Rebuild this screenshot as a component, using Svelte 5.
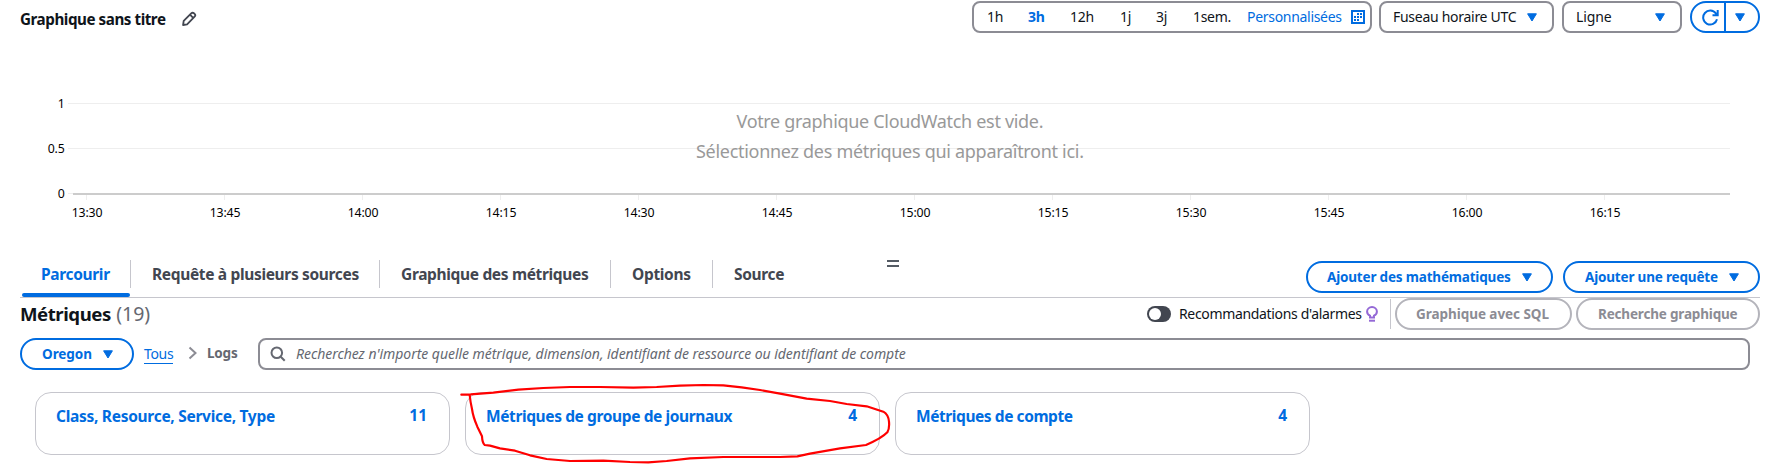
<script>
  const ranges = [
    { label: '1h', width: 41 },
    { label: '3h', width: 42, active: true },
    { label: '12h', width: 50 },
    { label: '1j', width: 36 },
    { label: '3j', width: 37 },
    { label: '1sem.', width: 54 }
  ];
  const ticks = ['13:30', '13:45', '14:00', '14:15', '14:30', '14:45', '15:00', '15:15', '15:30', '15:45', '16:00', '16:15'];
  const levels = [
    { label: '1', y: 69.5 },
    { label: '0.5', y: 114.5 },
    { label: '0', y: 159.5 }
  ];
  const tabs = [
    { label: 'Parcourir', width: 111, active: true },
    { label: 'Requête à plusieurs sources', width: 249 },
    { label: 'Graphique des métriques', width: 231 },
    { label: 'Options', width: 102 },
    { label: 'Source', width: 94 }
  ];
  const cards = [
    { name: 'Class, Resource, Service, Type', count: 11, spacing: -0.29 },
    { name: 'Métriques de groupe de journaux', count: 4, spacing: -0.39, marked: true },
    { name: 'Métriques de compte', count: 4, spacing: -0.43 }
  ];
</script>

{#snippet caret()}
  <svg class="caret" width="10" height="9" viewBox="0 0 10 9"><path d="M.6.8h8.800L5 8z" fill="currentColor" stroke="currentColor" stroke-width="1" stroke-linejoin="round" /></svg>
{/snippet}

<main>
  <header class="top">
    <h2>Graphique sans titre</h2>
    <svg class="pencil" width="16" height="16" viewBox="0 0 16 16" fill="none" stroke="#424650" stroke-width="1.8" stroke-linejoin="round"><path d="M2.1 14l.6-4.1 7.5-7.5c.8-.8 2-.8 2.8-.1l.6.6c.8.8.8 2 0 2.8l-7.5 7.6zM9 3.7l3.4 3.4" /></svg>
    <div class="controls">
      <div class="box ranges">
        {#each ranges as r}
          <span class:active={r.active} style="width:{r.width}px">{r.label}</span>
        {/each}
        <a class="custom">Personnalisées</a>
        <svg width="14" height="14" viewBox="0 0 14 14"><path fill="#006ce0" fill-rule="evenodd" d="M0 0h14v14H0zM2 2v10h10V2z" /><path fill="#006ce0" d="M6 3h2v2H6zM9 3h2v2H9zM3 6h2v2H3zM6 6h2v2H6zM9 6h2v2H9zM3 9h2v2H3zM6 9h2v2H6z" /></svg>
      </div>
      <div class="box zone"><span>Fuseau horaire UTC</span>{@render caret()}</div>
      <div class="box kind"><span>Ligne</span>{@render caret()}</div>
      <div class="refresh">
        <span class="half"><svg width="17" height="17" viewBox="0 0 17 17" fill="none" stroke="#006ce0" stroke-width="2"><path d="M15 10.2A7 7 0 1 1 13.9 4.5L15.6 6M15.7 1v5.2h-5.2" /></svg></span>
        <span class="half second">{@render caret()}</span>
      </div>
    </div>
  </header>

  <svg class="chart" width="1769" height="226" viewBox="0 0 1769 226">
    {#each levels as l}
      <path d="M68 {l.y}H{l.label === '0' ? 73 : 1730}" stroke="#eee" />
      <text class="axis" x="64.5" y={l.y + 4.5} text-anchor="end">{l.label}</text>
    {/each}
    <path d="M73 160H1730" stroke="#ccc" stroke-width="2" />
    {#each ticks as t, i}
      <path d="M{86.5 + 138 * i} 161v5" stroke="#eee" />
      <text class="axis" x={87 + 138 * i} y="183" text-anchor="middle">{t}</text>
    {/each}
    <text class="empty" x="890" y="94" text-anchor="middle" textLength="307">Votre graphique CloudWatch est vide.</text>
    <text class="empty" x="890" y="124" text-anchor="middle" textLength="388">Sélectionnez des métriques qui apparaîtront ici.</text>
  </svg>

  <nav class="tabs">
    {#each tabs as t}
      <div class="tab" class:active={t.active} style="width:{t.width}px"><span>{t.label}</span></div>
    {/each}
    <div class="actions">
      <button class="pill math">Ajouter des mathématiques{@render caret()}</button>
      <button class="pill query">Ajouter une requête{@render caret()}</button>
    </div>
    <i class="handle"></i>
  </nav>

  <section class="heading">
    <h1>Métriques <span>(19)</span></h1>
    <div class="tools">
      <i class="switch"></i>
      <span class="reco">Recommandations d'alarmes</span>
      <svg class="bulb" width="12" height="16" viewBox="0 0 12 16"><path d="M4 11.5V9.7C2.3 9 1.1 7.5 1.1 5.6a4.9 4.5 0 0 1 9.8 0C10.9 7.5 9.7 9 8 9.7v1.8z" fill="none" stroke="#9469d6" stroke-width="2" /><path d="M3 13.7h6v2H3z" fill="#9469d6" /></svg>
      <i class="rule"></i>
      <button class="pill off sql">Graphique avec SQL</button>
      <button class="pill off search-graph">Recherche graphique</button>
    </div>
  </section>

  <section class="filter">
    <button class="pill region">Oregon{@render caret()}</button>
    <a class="all">Tous</a>
    <svg class="chevron" width="10" height="14" viewBox="0 0 10 14" fill="none" stroke="#8c8c94" stroke-width="2"><path d="M1.5 1.5L7.5 7l-6 5.5" /></svg>
    <b class="logs">Logs</b>
    <div class="box search">
      <svg width="16" height="16" viewBox="0 0 16 16" fill="none" stroke="#656871" stroke-width="2"><circle cx="6.8" cy="6.8" r="5.3" /><path d="M10.7 10.7l4 4" /></svg>
      <em>Recherchez n'importe quelle métrique, dimension, identifiant de ressource ou identifiant de compte</em>
    </div>
  </section>

  <section class="cards">
    {#each cards as c}
      <article>
        <span class="name" style="letter-spacing:{c.spacing}px">{c.name}</span><span>{c.count}</span>
        {#if c.marked}
          <svg class="mark" width="480" height="95" viewBox="0 390 1440 285" fill="none" stroke="#f00" stroke-width="6.5" stroke-linejoin="round" stroke-linecap="round"><path d="M64 449L92 448 160 443 235 434 310 429 390 426 480 426 580 428 650 426 720 422 790 420 850 421 905 427 960 435 1020 446 1100 461 1170 468 1220 477 1280 484 1330 500Q1345 508 1347 530Q1349 550 1342 562Q1325 580 1278 600L1200 610 1110 626 1072 634 1020 636 850 636 750 640 680 648 625 652 570 651 490 647 390 648 320 642 270 631 225 617 180 610 150 602 134 600Q127 594 126 574L112 545Q99 515 96 492Q91 470 89 450" /></svg>
        {/if}
      </article>
    {/each}
  </section>
</main>

<style>
  :global(body) { background: #fff; }
  main { width: 1769px; height: 475px; overflow: hidden; font: 400 14px/20px "Noto Sans", sans-serif; color: #0f141a; white-space: nowrap; }
  main :is(div, button, article, i) { box-sizing: border-box; }
  svg { flex: none; display: block; }
  h1, h2 { margin: 0; }
  .top { display: flex; height: 34px; padding: 1px 9px 0 20px; box-sizing: border-box; }
  h2 { font-size: 15.2px; font-weight: 700; letter-spacing: -.45px; line-height: 36px; width: 161px; }
  .pencil { margin-top: 10px; }
  .controls { display: flex; margin-left: auto; height: 32px; }
  .box { border: 2px solid #8c8c94; border-radius: 8px; height: 32px; display: flex; align-items: center; }
  .ranges { width: 400px; padding-left: 13px; margin-right: 7px; letter-spacing: -.3px; }
  .ranges svg { margin-left: 1px; }
  .ranges .active { color: #006ce0; font-weight: 700; }
  .custom { color: #006ce0; width: 103px; }
  .caret { color: #006ce0; }
  .zone { width: 175px; padding: 0 15px 0 12px; margin-right: 8px; justify-content: space-between; letter-spacing: -.28px; }
  .kind { width: 120px; padding: 0 15px 0 12px; margin-right: 8px; justify-content: space-between; letter-spacing: -.1px; }
  .refresh { width: 70px; border: 2px solid #006ce0; border-radius: 16px; display: flex; box-sizing: border-box; }
  .half { width: 32px; display: flex; align-items: center; justify-content: center; padding-left: 4px; box-sizing: border-box; }
  .second { width: 34px; border-left: 2px solid #006ce0; padding: 0 5px 0 0; }
  .axis { font-size: 12.3px; letter-spacing: -.2px; }
  .empty { font-size: 18px; fill: #999; }
  .tabs { position: relative; display: flex; height: 38px; margin: 0 9px 0 20px; border-bottom: 1px solid #c6c6cd; box-sizing: border-box; }
  .tab { height: 28px; border-right: 1px solid #c6c6cd; padding-left: 21px; font: 700 15.5px/29px "Noto Sans", sans-serif; letter-spacing: -.34px; color: #424650; }
  .tab:nth-child(5) { border: 0; }
  .tab.active { position: relative; color: #006ce0; }
  .tab.active::after { content: ""; position: absolute; left: 2px; right: 0; top: 33px; height: 4px; border-radius: 2px; background: #006ce0; }
  .actions { display: flex; gap: 10px; margin: 1px 0 0 auto; }
  .pill { display: flex; align-items: center; justify-content: space-between; height: 32px; border: 2px solid #006ce0; border-radius: 16px; background: #fff; color: #006ce0; font: 700 13.5px/20px "Noto Sans", sans-serif; letter-spacing: -.18px; padding: 0 19px; }
  .math { width: 247px; }
  .query { width: 197px; padding-left: 20px; }
  .handle { position: absolute; left: 867px; top: 0; width: 12px; height: 7px; border: solid #545b64; border-width: 2px 0; }
  .heading { display: flex; height: 32px; padding: 0 9px 0 20px; justify-content: space-between; }
  h1 { font-size: 18.6px; line-height: 32px; font-weight: 700; letter-spacing: -.45px; }
  h1 span { font-weight: 400; font-size: 19.5px; color: #656871; letter-spacing: 0; margin-left: 1px; }
  .tools { display: flex; align-items: center; }
  .switch { width: 24px; height: 16px; border-radius: 8px; background: #424650; padding: 2px; }
  .switch::after { content: ""; display: block; width: 12px; height: 12px; border-radius: 6px; background: #fff; }
  .reco { margin-left: 8px; width: 187px; letter-spacing: -.34px; }
  .rule { width: 1px; height: 30px; background: #c6c6cd; margin: 0 4px 0 12px; }
  .off { border-color: #b4b4bb; color: #8c8c94; }
  .sql { width: 177px; margin-right: 4px; letter-spacing: -.05px; }
  .search-graph { width: 184px; padding-left: 20px; }
  .filter { display: flex; align-items: center; padding: 8px 19px 0 20px; }
  .region { width: 114px; padding-left: 20px; letter-spacing: -.05px; }
  .all { color: #006ce0; border-bottom: 1px solid #006ce0; line-height: 18px; letter-spacing: -.35px; width: 29px; margin-left: 10px; }
  .chevron { margin: -3px 0 0 15px; }
  .logs { font-weight: 700; font-size: 13.5px; color: #656871; letter-spacing: -.2px; margin: -2px 0 0 9px; width: 51px; }
  .search { flex: 1; padding-left: 10px; }
  .search em { color: #656871; margin-left: 10px; letter-spacing: -.045px; }
  .cards { display: flex; gap: 15px; padding: 22px 0 0 35px; }
  article { position: relative; width: 415px; height: 63px; border: 1px solid #c6c6cd; border-radius: 16px; padding: 10px 22px 0 20px; display: flex; justify-content: space-between; font: 700 15.5px/24px "Noto Sans", sans-serif; color: #006ce0; }
  .name { padding-top: 1px; }
  .mark { position: absolute; left: -26px; top: -18px; pointer-events: none; }
</style>
